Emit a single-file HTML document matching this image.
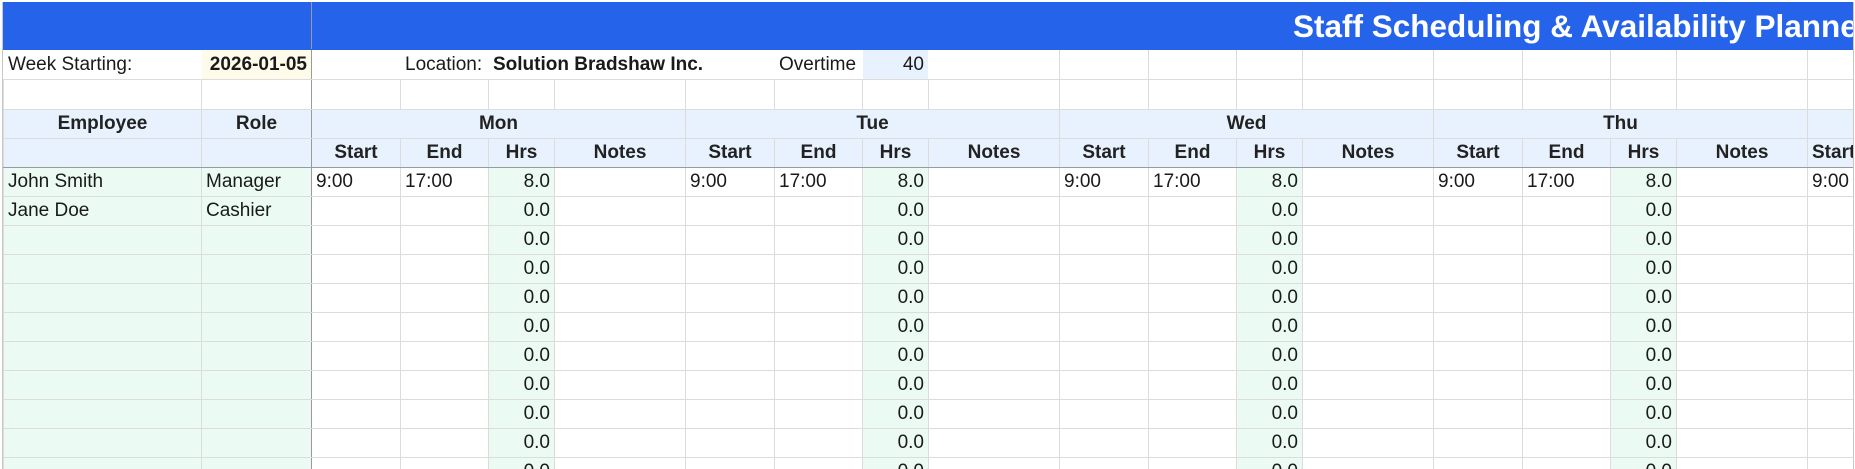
<!DOCTYPE html>
<html><head><meta charset="utf-8"><style>
html,body{margin:0;padding:0;background:#fff;}
body{width:1855px;height:469px;overflow:hidden;position:relative;font-family:"Liberation Sans",sans-serif;font-size:19px;color:#1a1a1a;}
.wrap{position:absolute;left:2px;top:2px;width:1850px;height:467px;overflow:hidden;border-left:1px solid #c8c8c8;border-right:1px solid #c8c8c8;}
table{border-collapse:collapse;table-layout:fixed;width:1893px;}
td{border:1px solid #dcdcdc;padding:0 4px;white-space:nowrap;overflow:hidden;height:28px;line-height:28px;}
tr.blue td{background:#2563eb;border-color:#2563eb;height:46px;}
tr.r2 td{height:29px;border-top-color:#fff;}
tr.r2 td.w{border-left-color:#fff;border-right-color:#fff;}
tr.r3 td{height:29px;}
tr.h td{background:#e8f2fe;font-weight:bold;text-align:center;color:#222;}
tr.h1 td{height:28px;}
tr.h2 td{height:27px;border-bottom:1px solid #9a9a9a;}
.fz{border-right:1px solid #9a9a9a !important;}
.g{background:#ebfbf3;}
.n{text-align:right;background:#ebfbf3;}
.title{position:absolute;left:1290px;top:6px;color:#fff;font-weight:bold;font-size:31.5px;white-space:nowrap;}
</style></head><body>
<div class="wrap">
<table>
<colgroup><col style="width:198px"><col style="width:110px">
<col style="width:89px"><col style="width:88px"><col style="width:66px"><col style="width:131px">
<col style="width:89px"><col style="width:88px"><col style="width:66px"><col style="width:131px">
<col style="width:89px"><col style="width:88px"><col style="width:66px"><col style="width:131px">
<col style="width:89px"><col style="width:88px"><col style="width:66px"><col style="width:131px">
<col style="width:89px"></colgroup>
<tr class="blue"><td></td><td class="fz"></td><td colspan="17"></td></tr>
<tr class="r2"><td class="w">Week Starting:</td><td class="fz" style="background:#fffbea;font-weight:bold;text-align:right">2026-01-05</td><td class="w"></td><td class="w">Location:</td><td colspan="2" class="w" style="font-weight:bold;overflow:visible">Solution Bradshaw Inc.</td><td class="w"></td><td class="w" style="overflow:visible">Overtime</td><td class="w" style="background:#e8f2fe;text-align:right">40</td><td></td><td></td><td></td><td></td><td></td><td></td><td></td><td></td><td></td><td></td></tr>
<tr class="r3"><td></td><td class="fz"></td><td></td><td></td><td></td><td></td><td></td><td></td><td></td><td></td><td></td><td></td><td></td><td></td><td></td><td></td><td></td><td></td><td></td></tr>
<tr class="h h1"><td>Employee</td><td class="fz">Role</td><td colspan="4">Mon</td><td colspan="4">Tue</td><td colspan="4">Wed</td><td colspan="4">Thu</td><td></td></tr>
<tr class="h h2"><td></td><td class="fz"></td><td>Start</td><td>End</td><td>Hrs</td><td>Notes</td><td>Start</td><td>End</td><td>Hrs</td><td>Notes</td><td>Start</td><td>End</td><td>Hrs</td><td>Notes</td><td>Start</td><td>End</td><td>Hrs</td><td>Notes</td><td style="text-align:left">Start</td></tr>
<tr><td class="g">John Smith</td><td class="g fz">Manager</td><td>9:00</td><td>17:00</td><td class="n">8.0</td><td></td><td>9:00</td><td>17:00</td><td class="n">8.0</td><td></td><td>9:00</td><td>17:00</td><td class="n">8.0</td><td></td><td>9:00</td><td>17:00</td><td class="n">8.0</td><td></td><td>9:00</td></tr>
<tr><td class="g">Jane Doe</td><td class="g fz">Cashier</td><td></td><td></td><td class="n">0.0</td><td></td><td></td><td></td><td class="n">0.0</td><td></td><td></td><td></td><td class="n">0.0</td><td></td><td></td><td></td><td class="n">0.0</td><td></td><td></td></tr>
<tr><td class="g"></td><td class="g fz"></td><td></td><td></td><td class="n">0.0</td><td></td><td></td><td></td><td class="n">0.0</td><td></td><td></td><td></td><td class="n">0.0</td><td></td><td></td><td></td><td class="n">0.0</td><td></td><td></td></tr>
<tr><td class="g"></td><td class="g fz"></td><td></td><td></td><td class="n">0.0</td><td></td><td></td><td></td><td class="n">0.0</td><td></td><td></td><td></td><td class="n">0.0</td><td></td><td></td><td></td><td class="n">0.0</td><td></td><td></td></tr>
<tr><td class="g"></td><td class="g fz"></td><td></td><td></td><td class="n">0.0</td><td></td><td></td><td></td><td class="n">0.0</td><td></td><td></td><td></td><td class="n">0.0</td><td></td><td></td><td></td><td class="n">0.0</td><td></td><td></td></tr>
<tr><td class="g"></td><td class="g fz"></td><td></td><td></td><td class="n">0.0</td><td></td><td></td><td></td><td class="n">0.0</td><td></td><td></td><td></td><td class="n">0.0</td><td></td><td></td><td></td><td class="n">0.0</td><td></td><td></td></tr>
<tr><td class="g"></td><td class="g fz"></td><td></td><td></td><td class="n">0.0</td><td></td><td></td><td></td><td class="n">0.0</td><td></td><td></td><td></td><td class="n">0.0</td><td></td><td></td><td></td><td class="n">0.0</td><td></td><td></td></tr>
<tr><td class="g"></td><td class="g fz"></td><td></td><td></td><td class="n">0.0</td><td></td><td></td><td></td><td class="n">0.0</td><td></td><td></td><td></td><td class="n">0.0</td><td></td><td></td><td></td><td class="n">0.0</td><td></td><td></td></tr>
<tr><td class="g"></td><td class="g fz"></td><td></td><td></td><td class="n">0.0</td><td></td><td></td><td></td><td class="n">0.0</td><td></td><td></td><td></td><td class="n">0.0</td><td></td><td></td><td></td><td class="n">0.0</td><td></td><td></td></tr>
<tr><td class="g"></td><td class="g fz"></td><td></td><td></td><td class="n">0.0</td><td></td><td></td><td></td><td class="n">0.0</td><td></td><td></td><td></td><td class="n">0.0</td><td></td><td></td><td></td><td class="n">0.0</td><td></td><td></td></tr>
<tr><td class="g"></td><td class="g fz"></td><td></td><td></td><td class="n">0.0</td><td></td><td></td><td></td><td class="n">0.0</td><td></td><td></td><td></td><td class="n">0.0</td><td></td><td></td><td></td><td class="n">0.0</td><td></td><td></td></tr>
</table>
<div class="title">Staff Scheduling &amp; Availability Planner</div>
</div>
</body></html>
